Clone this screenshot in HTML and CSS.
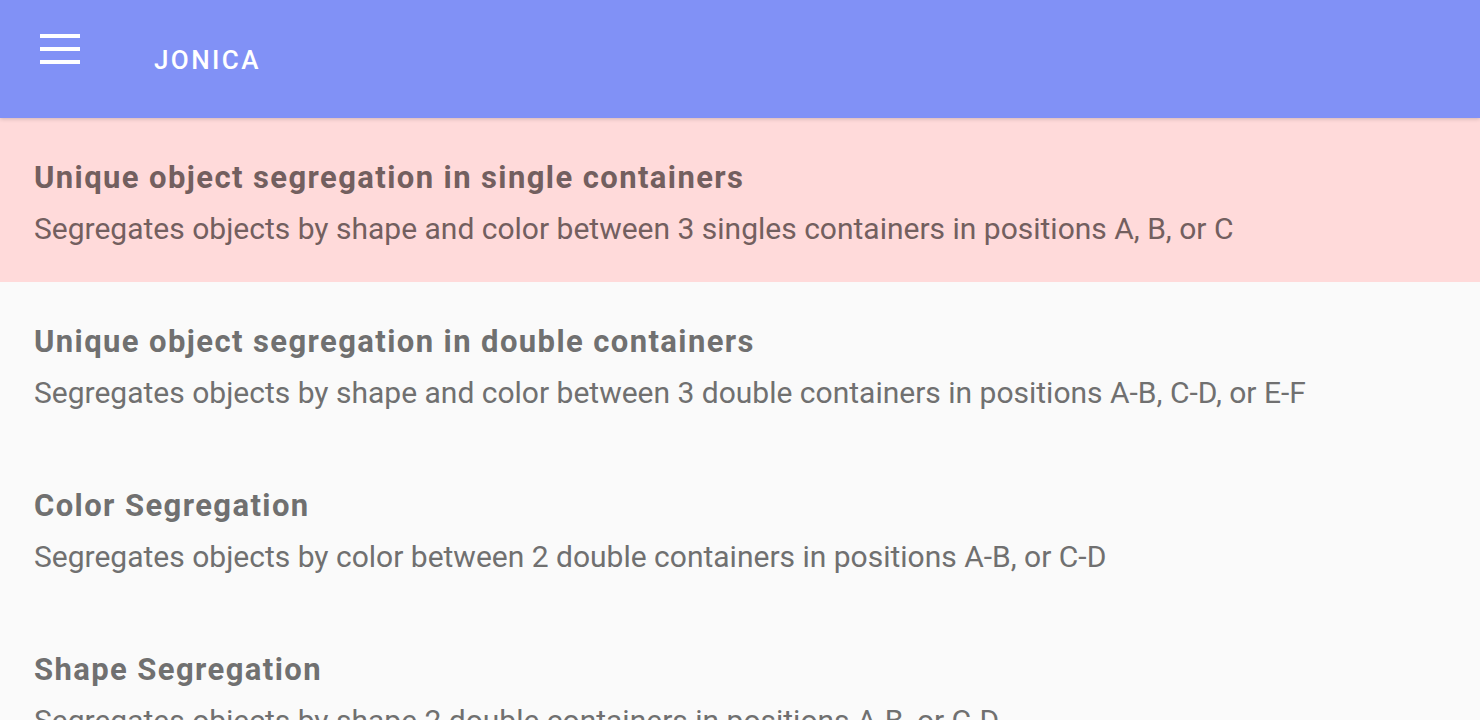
FILE: index.html
```html
<!DOCTYPE html>
<html>
<head>
<meta charset="utf-8">
<link rel="stylesheet" href="styles.css">
</head>
<body>
<header class="toolbar">
  <div class="menu-btn">
    <span class="bar"></span><span class="bar"></span><span class="bar"></span>
  </div>
  <div class="title">JONICA</div>
</header>
<main class="list">
  <div class="item selected">
    <div class="item-title">Unique object segregation in single containers</div>
    <div class="item-sub">Segregates objects by shape and color between 3 singles containers in positions A, B, or C</div>
  </div>
  <div class="item">
    <div class="item-title">Unique object segregation in double containers</div>
    <div class="item-sub">Segregates objects by shape and color between 3 double containers in positions A-B, C-D, or E-F</div>
  </div>
  <div class="item">
    <div class="item-title">Color Segregation</div>
    <div class="item-sub">Segregates objects by color between 2 double containers in positions A-B, or C-D</div>
  </div>
  <div class="item">
    <div class="item-title">Shape Segregation</div>
    <div class="item-sub">Segregates objects by shape 2 double containers in positions A-B, or C-D</div>
  </div>
</main>
</body>
</html>
```
FILE: styles.css
```css
html, body {
  margin: 0;
  padding: 0;
  height: 100%;
  overflow: hidden;
  background: #fafafa;
  font-family: Roboto, "Liberation Sans", sans-serif;
}
.toolbar {
  position: relative;
  z-index: 2;
  height: 118px;
  background: #8191f6;
  display: flex;
  align-items: flex-start;
  padding-left: 40px;
  box-shadow: 0 1px 4px rgba(0,0,0,0.18);
}
.menu-btn {
  width: 40px;
  padding-top: 34px;
  display: flex;
  flex-direction: column;
  gap: 9px;
}
.bar {
  display: block;
  height: 4px;
  background: #ffffff;
}
.title {
  margin-left: 74px;
  margin-top: 42px;
  color: #ffffff;
  font-size: 26px;
  font-weight: 500;
  letter-spacing: 2.4px;
  line-height: 36px;
}
.list {
  display: flex;
  flex-direction: column;
}
.item {
  height: 164px;
  flex: 0 0 164px;
  box-sizing: border-box;
  padding: 40px 34px 0;
  color: #707070;
}
.item.selected {
  background: #ffdada;
  color: #735f5f;
}
.item-title {
  font-size: 31px;
  font-weight: 700;
  letter-spacing: 1.4px;
  line-height: 40px;
  height: 40px;
}
.item-sub {
  margin-top: 11px;
  font-size: 30px;
  font-weight: 400;
  line-height: 40px;
}
```
